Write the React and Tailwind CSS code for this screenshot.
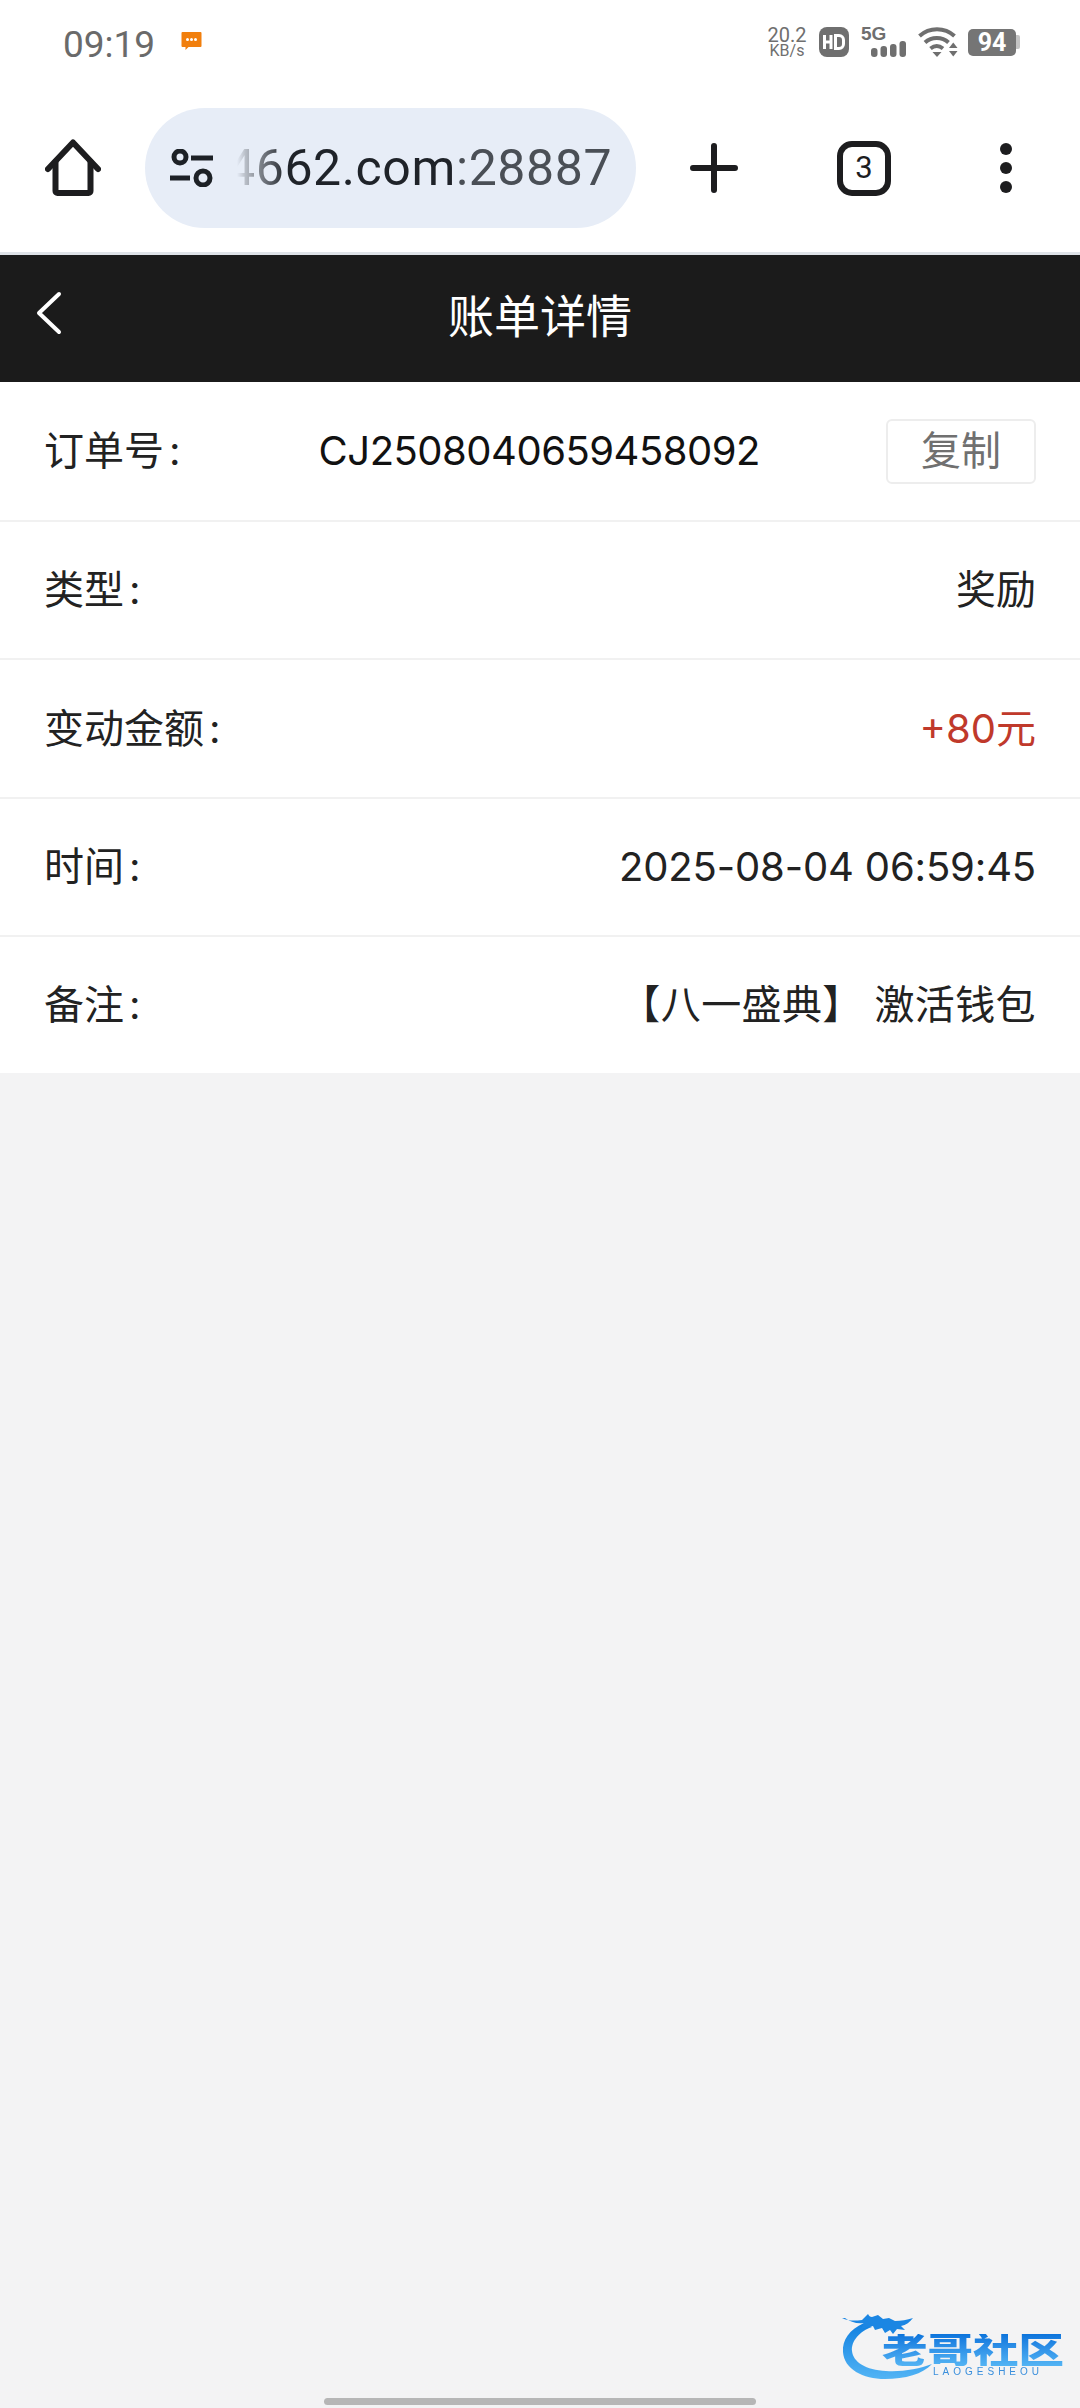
const SANS = 'font-["Inter","Noto_Sans_CJK_SC",sans-serif]';

function Row({ label, children }) {
  return (
    <div className="h-[138.4px] first:h-[140px] last:h-[136px] border-b-2 border-[#f1f1f1] last:border-b-0 bg-white flex items-center justify-between px-[44px] text-[40px] text-[#222222]">
      <span className="shrink-0">{label}<span className="ml-[5px]">:</span></span>
      {children}
    </div>
  );
}

function StatusIcons() {
  return (
    <div className="flex items-center text-[#6f6f6f]">
      <div className="w-[38px] flex flex-col items-center text-[#6f6f6f] font-['Roboto',sans-serif]">
        <span className="text-[20px] leading-[16px]">20.2</span>
        <span className="text-[16px] leading-[15px]">KB/s</span>
      </div>
      <svg className="ml-[13px]" width="30" height="30" viewBox="0 0 30 30">
        <rect width="30" height="30" rx="8" fill="#6f6f6f" />
        <path d="M5.500 8v14M12 8v14M5.500 15H12" stroke="#fff" strokeWidth="3" fill="none" />
        <path d="M16.500 8.500h3.500a4.500 4.500 0 0 1 4.500 4.500v4a4.500 4.500 0 0 1-4.500 4.500h-3.500z" stroke="#fff" strokeWidth="3" fill="none" />
      </svg>
      <div className="ml-[12px] relative w-[45px] h-[30px]">
        <span className="absolute left-0 top-[-3px] text-[19px] font-bold leading-[20px] text-[#6f6f6f] font-['Liberation_Sans',sans-serif]">5G</span>
        <svg className="absolute left-0 top-0" width="45" height="30" viewBox="0 0 45 30">
          <rect x="10" y="21" width="6.500" height="9" rx="3" fill="#6f6f6f" />
          <rect x="19.500" y="19" width="6.500" height="11" rx="3" fill="#6f6f6f" />
          <rect x="29" y="17" width="6.500" height="13" rx="3" fill="#6f6f6f" />
          <rect x="38.500" y="14" width="6.500" height="16" rx="3" fill="#6f6f6f" />
        </svg>
      </div>
      <svg className="ml-[12px]" width="40" height="30" viewBox="0 0 40 30" fill="none" stroke="#6f6f6f" strokeWidth="4">
        <path d="M1.500 9C11.500 0 26.500 0 36.500 9" />
        <path d="M7 15.500c6.500-6 17-6 23.500 0" />
        <path d="M12.500 21.500c4-3.200 8.500-3.200 12.500 0" />
        <path d="M14.500 25h9l-4.500 5z" fill="#6f6f6f" stroke="none" />
        <path d="M31 21h8.500l-4.250-5.500z" fill="#6f6f6f" stroke="none" />
        <path d="M31 24h8.500l-4.250 5.500z" fill="#6f6f6f" stroke="none" />
      </svg>
      <div className="ml-[10px] flex items-center">
        <div className="w-[48px] h-[27px] rounded-[5px] bg-[#757575] flex items-center justify-center text-white text-[25px] font-bold leading-none font-['Roboto',sans-serif]">94</div>
        <div className="w-[4px] h-[14px] rounded-r-[2px] bg-[#c4c4c4]" />
      </div>
    </div>
  );
}

export default function App() {
  return (
    <div className={`relative w-[1080px] h-[2408px] bg-[#f3f3f4] flex flex-col overflow-hidden ${SANS}`}>
      {/* Status bar */}
      <div className="h-[84px] bg-white flex items-center justify-between pl-[63px] pr-[60px] shrink-0">
        <div className="flex items-center gap-[26px]">
          <span className="text-[37px] text-[#6a6a6a] leading-none mt-[5px] font-['Roboto',sans-serif]">09:19</span>
          <svg className="mb-[1px]" width="21" height="19" viewBox="0 0 20 19">
            <path d="M1 0h18a1 1 0 0 1 1 1v13a1 1 0 0 1-1 1H7l-3 3v-3H1a1 1 0 0 1-1-1V1a1 1 0 0 1 1-1z" fill="#f17f0d" />
            <circle cx="6" cy="7.500" r="1.500" fill="#fff" /><circle cx="10" cy="7.500" r="1.500" fill="#fff" /><circle cx="14" cy="7.500" r="1.500" fill="#fff" />
          </svg>
        </div>
        <StatusIcons />
      </div>

      {/* Browser toolbar */}
      <div className="h-[171px] bg-white border-b-[3px] border-[#dfe3e8] flex items-center shrink-0">
        <div className="w-[145px] h-full flex items-center justify-center">
          <svg width="56" height="58" viewBox="0 0 56 58" fill="none" stroke="#1d1d1f" strokeWidth="6" strokeLinecap="round" strokeLinejoin="round">
            <path d="M3 30 28 3.500 53 30" />
            <path d="M10.500 23v29a2 2 0 0 0 2 2h31a2 2 0 0 0 2-2V23" />
          </svg>
        </div>
        <div className="w-[491px] h-[120px] rounded-full bg-[#e7edf7] flex items-center pl-[24px] pr-[24px]">
          <svg className="shrink-0" width="44" height="38" viewBox="0 0 44 38" fill="none" stroke="#1d2126" strokeWidth="5">
            <circle cx="11" cy="8" r="6" />
            <path d="M22 9h22" />
            <path d="M1 29h20" />
            <circle cx="34" cy="29" r="7" />
          </svg>
          <div className="ml-[14px] flex-1 whitespace-nowrap font-['Roboto',sans-serif] text-[50px] tracking-[0.6px] leading-none flex justify-end text-[#1f2329] pr-[3px] [mask-image:linear-gradient(to_right,transparent_10px,rgba(0,0,0,0.22)_18px,rgba(0,0,0,0.5)_32px,black_60px)]">
            <span>4662.com</span>
            <span className="text-[#4a4f56]">:28887</span>
          </div>
        </div>
        <div className="flex-1 flex items-center pl-[54px]">
          <svg width="48" height="50" viewBox="0 0 48 50" stroke="#1d1d1f" strokeWidth="6" strokeLinecap="round">
            <path d="M24 3v44M3 25h42" />
          </svg>
          <div className="ml-[99px] w-[54px] h-[55px] rounded-[15px] border-[6px] border-[#1d1d1f] flex items-center justify-center text-[31px] text-[#1d1d1f] font-['Roboto',sans-serif]">3</div>
          <svg className="ml-[108px]" width="14" height="50" viewBox="0 0 14 50" fill="#1d1d1f">
            <circle cx="7" cy="6" r="6" /><circle cx="7" cy="25" r="6" /><circle cx="7" cy="44" r="6" />
          </svg>
        </div>
      </div>

      {/* Page header */}
      <div className="relative h-[127px] bg-[#1b1b1b] flex items-center justify-center shrink-0 text-white text-[46px]">
        <svg className="absolute left-[36px] top-[36px]" width="26" height="44" viewBox="0 0 26 44" fill="none" stroke="#fff" strokeWidth="4" strokeLinecap="round" strokeLinejoin="round">
          <path d="M23 3 3 22l20 19" />
        </svg>
        <span className="mb-[5px] leading-none">账单详情</span>
      </div>

      {/* Detail rows */}
      <div className="flex flex-col shrink-0">
        <Row label="订单号">
          <span className="ml-[12px] text-[#111111] tracking-[-0.5px]">CJ2508040659458092</span>
          <button className="w-[150px] h-[65px] border-2 border-[#ededed] rounded-[6px] text-[#707070] text-[40px] leading-none flex items-center justify-center shrink-0">复制</button>
        </Row>
        <Row label="类型"><span>奖励</span></Row>
        <Row label="变动金额"><span className="text-[#c0392b]">+80元</span></Row>
        <Row label="时间"><span className="tracking-[-0.15px]">2025-08-04 06:59:45</span></Row>
        <Row label="备注"><span className="tracking-[0.4px]">【八一盛典】 激活钱包</span></Row>
      </div>

      {/* Watermark */}
      <div className="absolute left-[840px] top-[2310px] w-[225px] h-[76px] blur-[0.7px]">
        <svg className="absolute inset-0" width="225" height="76" viewBox="0 0 225 76" fill="none">
          <defs>
            <linearGradient id="arc" x1="0" y1="0" x2="0" y2="1">
              <stop offset="0" stopColor="#0f7fe0" />
              <stop offset="1" stopColor="#52b4f5" />
            </linearGradient>
          </defs>
          <path d="M24 13C9 20 2 30 3 42c1 17 20 27 42 27 20 0 38-5 47-15-13 5-30 8-46 7-20-1-33-9-34-20-1-10 8-20 20-24z" fill="url(#arc)" />
          <path d="M2 8c6 3 12 3 20 2l6-6c1 2 2 3 4 3l6-2 5 4 6-1 6 3c6 0 12-1 18-3-3 4-7 7-12 8l4 4-8-1-4 5-3-4-5 3-3-5-7 2-2-4c-6 1-8 2-12 3 1-3 2-4 3-6-7 1-14-1-19-5z" fill="#1b86e3" />
        </svg>
        <span className="absolute left-[42px] top-[24px] origin-left scale-x-[1.3] text-[35px] leading-[32px] font-black whitespace-nowrap text-transparent bg-clip-text bg-gradient-to-b from-[#0b74dc] to-[#53b4f4]">老哥社区</span>
        <span className="absolute left-[93px] top-[56px] text-[10px] leading-[12px] tracking-[4px] text-[#3a8fdc] whitespace-nowrap font-['Liberation_Sans',sans-serif]">LAOGESHEOU</span>
      </div>

      {/* Home indicator */}
      <div className="absolute left-[324px] bottom-[3px] w-[432px] h-[7px] rounded-full bg-[#b6b6b6]" />
    </div>
  );
}
